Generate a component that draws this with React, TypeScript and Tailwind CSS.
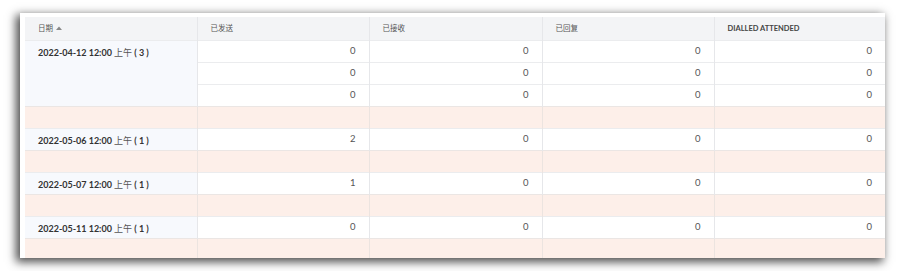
import React from "react";

interface Group {
  date: string;
  count: number;
  rows: number[][];
}

const groups: Group[] = [
  { date: "2022-04-12 12:00", count: 3, rows: [[0, 0, 0, 0], [0, 0, 0, 0], [0, 0, 0, 0]] },
  { date: "2022-05-06 12:00", count: 1, rows: [[2, 0, 0, 0]] },
  { date: "2022-05-07 12:00", count: 1, rows: [[1, 0, 0, 0]] },
  { date: "2022-05-11 12:00", count: 1, rows: [[0, 0, 0, 0]] },
];

const headers = ["已发送", "已接收", "已回复"];

const font = "font-['Lato','Noto_Sans_CJK_SC',sans-serif]";

export default function App() {
  return (
    <div className={`w-[905px] h-[271px] bg-white pl-[20px] pt-[13px] ${font}`}>
      <div className="w-[865px] h-[245px] bg-white pl-[5px] pt-[4px] overflow-hidden shadow-[-3px_3px_9px_1px_rgba(0,0,0,0.7)]">
        <table className="table-fixed border-collapse w-[860px] text-[9.5px]">
          <colgroup>
            <col className="w-[172px]" />
            <col className="w-[172px]" />
            <col className="w-[173px]" />
            <col className="w-[172px]" />
            <col className="w-[171px]" />
          </colgroup>
          <thead>
            <tr className="h-[23px] bg-[#f3f4f6] text-[7.5px] text-[#555]">
              <th className="border-r border-[#e6e7ea] pl-[13px] text-left font-normal">
                <span className="inline-flex items-center gap-[3px]">
                  日期
                  <svg width="6" height="4" viewBox="0 0 6 4">
                    <path d="M0 4 L3 0.5 L6 4 Z" fill="#888" />
                  </svg>
                </span>
              </th>
              {headers.map((h) => (
                <th key={h} className="border-r border-[#e6e7ea] pl-[13px] text-left font-normal">
                  {h}
                </th>
              ))}
              <th className="pl-[13px] text-left font-bold text-[#444]">DIALLED ATTENDED</th>
            </tr>
          </thead>
          <tbody>
            {groups.map((g) => (
              <React.Fragment key={g.date}>
                {g.rows.map((r, i) => (
                  <tr key={i} className="h-[22px] border-t border-[#ebecee]">
                    {i === 0 && (
                      <td
                        rowSpan={g.rows.length}
                        className="align-top pt-[5px] pl-[13px] bg-[#f7f9fd] border-r border-[#e6e7ea] text-[9px] text-[#333] whitespace-nowrap"
                      >
                        <span className="font-bold">{g.date} </span>
                        <span className="text-[#555]">上午</span>
                        <span className="font-bold"> ( {g.count} )</span>
                      </td>
                    )}
                    {r.map((v, j) => (
                      <td
                        key={j}
                        className={`bg-white text-right pr-[13px] text-[#555] ${j < 3 ? "border-r border-[#e6e7ea]" : ""}`}
                      >
                        {v}
                      </td>
                    ))}
                  </tr>
                ))}
                <tr className="h-[22px] bg-[#fdefe9] border-t border-[#ebe6e4]">
                  {[0, 1, 2, 3, 4].map((k) => (
                    <td key={k} className={k < 4 ? "border-r border-[#ece4e0]" : ""}></td>
                  ))}
                </tr>
              </React.Fragment>
            ))}
          </tbody>
        </table>
      </div>
    </div>
  );
}
